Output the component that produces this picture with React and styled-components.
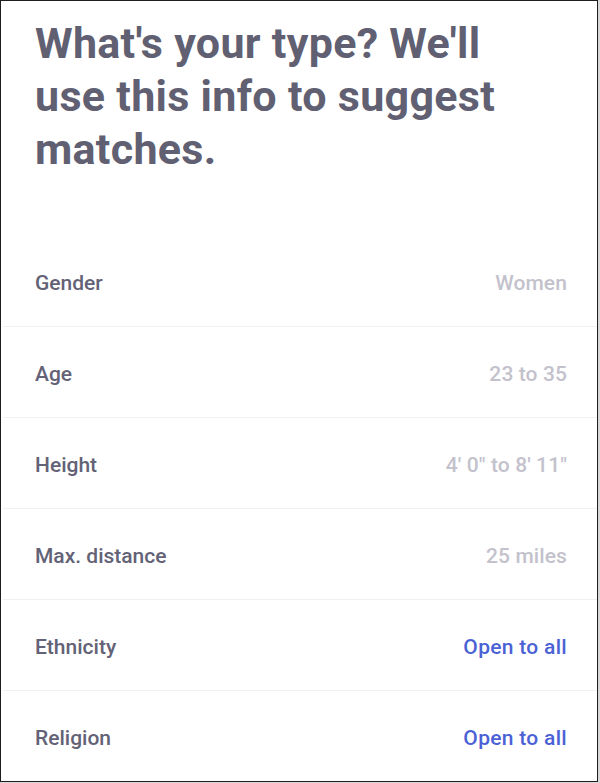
import React from 'react'
import styled, { createGlobalStyle } from 'styled-components'

const GlobalStyle = createGlobalStyle`
    html, body {
        margin: 0;
        padding: 0;
        background: #d9d9d9;
    }
    body {
        font-family: Roboto, "Noto Sans", sans-serif;
    }
`

const Screen = styled.div`
    box-sizing: border-box;
    width: 598px;
    height: 782px;
    background: #ffffff;
    border: 1px solid #1e1e1e;
    overflow: hidden;
    display: flex;
    flex-direction: column;
`

const Title = styled.h1`
    margin: 16px 0 0;
    padding: 0 40px 0 34px;
    font-size: 43px;
    line-height: 53px;
    font-weight: 700;
    color: #606072;
    letter-spacing: 0.3px;
`

const List = styled.div`
    margin-top: 60px;
    display: flex;
    flex-direction: column;
`

const Row = styled.div`
    flex: none;
    height: 86px;
    display: flex;
    align-items: center;
    justify-content: space-between;
    margin-left: 2px;
    padding: 4px 30px 0 32px;
    border-top: ${props => (props.first ? 'none' : '1px solid #f1f1f4')};
`

const Label = styled.span`
    font-size: 21px;
    font-weight: 500;
    color: #636276;
`

const Value = styled.span`
    font-size: 21px;
    font-weight: 500;
    letter-spacing: ${props => (props.link ? '0.3px' : '0.1px')};
    color: ${props => (props.link ? '#4b62d5' : '#c3c2cc')};
`

const prefs = [
    { label: 'Gender', value: 'Women' },
    { label: 'Age', value: '23 to 35' },
    { label: 'Height', value: '4\' 0" to 8\' 11"' },
    { label: 'Max. distance', value: '25 miles' },
    { label: 'Ethnicity', value: 'Open to all', link: true },
    { label: 'Religion', value: 'Open to all', link: true },
]

export default function App() {
    return (
        <React.Fragment>
            <GlobalStyle />
            <Screen>
                <Title>What's your type? We'll use this info to suggest matches.</Title>
                <List>
                    {prefs.map((p, i) => (
                        <Row key={p.label} first={i === 0}>
                            <Label>{p.label}</Label>
                            <Value link={p.link}>{p.value}</Value>
                        </Row>
                    ))}
                </List>
            </Screen>
        </React.Fragment>
    )
}
